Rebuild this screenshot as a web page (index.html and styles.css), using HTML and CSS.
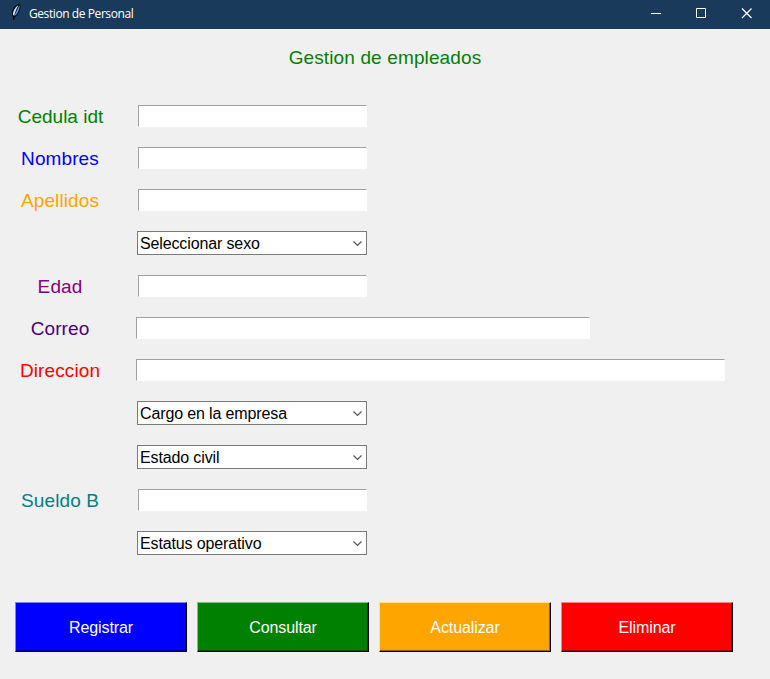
FILE: index.html
```html
<!DOCTYPE html>
<html lang="es">
<head>
<meta charset="utf-8">
<title>Gestion de Personal</title>
<link rel="stylesheet" href="styles.css">
</head>
<body>
<header class="titlebar">
<svg class="feather" width="16" height="17" viewBox="0 0 16 17"><path d="M11 0h2l.5 3-1 4-2 4-2.500 2L7 16H6v-3L5 11V7l2-4z" fill="#05080e"/><path d="M12.500 1v3l-1.500 4-2 3-2 1z" fill="#5c93d6"/><path d="M11.500 1L9 3 7 6 6 9v2l1 .5L9 6z" fill="#d3e8fa"/></svg>
<span class="caption">Gestion de Personal</span>
<svg class="controls" width="138" height="28" viewBox="0 0 138 28" fill="none" stroke="#fff"><path d="M19 13.500h10M64.500 8.500h9v9h-9z"/><path d="M110 8.500l9.500 9.500M119.500 8.500l-9.500 9.500" stroke-width="1.200"/></svg>
</header>
<main>
<h1>Gestion de empleados</h1>
<form class="form">
<div class="row"><label class="green">Cedula idt</label><input class="short"></div>
<div class="row"><label class="blue">Nombres</label><input class="short"></div>
<div class="row"><label class="orange">Apellidos</label><input class="short"></div>
<div class="row combo-row"><div class="combo"><span>Seleccionar sexo</span><svg width="9" height="6" viewBox="0 0 9 6"><path d="M.5.500l4 4 4-4"/></svg></div></div>
<div class="row"><label class="purple">Edad</label><input class="short"></div>
<div class="row"><label class="indigo">Correo</label><input class="medium"></div>
<div class="row"><label class="red">Direccion</label><input class="long"></div>
<div class="row combo-row"><div class="combo"><span>Cargo en la empresa</span><svg width="9" height="6" viewBox="0 0 9 6"><path d="M.5.500l4 4 4-4"/></svg></div></div>
<div class="row combo-row"><div class="combo"><span>Estado civil</span><svg width="9" height="6" viewBox="0 0 9 6"><path d="M.5.500l4 4 4-4"/></svg></div></div>
<div class="row"><label class="teal">Sueldo B</label><input class="short"></div>
<div class="row combo-row"><div class="combo"><span>Estatus operativo</span><svg width="9" height="6" viewBox="0 0 9 6"><path d="M.5.500l4 4 4-4"/></svg></div></div>
</form>
<div class="actions"><button class="bg-blue">Registrar</button><button class="bg-green">Consultar</button><button class="bg-orange">Actualizar</button><button class="bg-red">Eliminar</button></div>
</main>
</body>
</html>
```
FILE: styles.css
```css
* { box-sizing: border-box; }
body { margin: 0; height: 679px; overflow: hidden; background: #f0f0f0; font-family: "Liberation Sans", Arial, sans-serif; }
.titlebar { display: flex; height: 29px; padding-left: 7px; background: #1a3a5c; color: #fff; }
.feather { margin-top: 4px; }
.caption { margin-left: 6px; font: 12px/28px "Open Sans", sans-serif; letter-spacing: -.42px; }
.controls { margin-left: auto; }
h1 { margin: 17px 0 0; height: 24px; font-size: 19px; line-height: 24px; font-weight: 400; letter-spacing: .13px; color: green; text-align: center; }
.form { margin-top: 25px; }
.row { display: flex; align-items: center; height: 42px; }
.combo-row { height: 44px; padding-left: 137px; }
label { width: 120px; flex: none; padding: 2px 0 0; text-align: center; font-size: 19px; line-height: 24px; letter-spacing: .1px; }
label.green { padding-left: 1px; letter-spacing: 0; }
input { height: 22px; margin: 0 0 0 18px; padding: 0; border: 1px solid; border-color: #a0a0a0 #fff #fff #a0a0a0; background: #fff; outline: 0; }
.short { width: 229px; }
.medium { width: 454px; margin-left: 16px; }
.long { width: 589px; margin-left: 16px; }
.combo { display: flex; align-items: center; justify-content: space-between; width: 230px; height: 24px; padding: 2px 4px 0 2px; border: 1px solid #7a7a7a; background: #fff; font-size: 16px; letter-spacing: -.13px; }
.combo path { fill: none; stroke: #555; stroke-width: 1.2; }
.actions { display: flex; gap: 10px; margin: 37px 0 0 15px; }
button { width: 172px; height: 50px; padding: 1px 0 0; border: 1px solid; border-right-color: #000; border-bottom-color: #000; box-shadow: inset -1px -1px var(--shade); background: var(--face); border-top-color: var(--light); border-left-color: var(--light); color: #fff; font: 16px "Liberation Sans", sans-serif; letter-spacing: -.1px; }
.green { color: green; } .blue { color: blue; } .orange { color: orange; } .purple { color: purple; } .indigo { color: indigo; } .red { color: red; } .teal { color: teal; }
.bg-blue { --face: blue; --light: #7f7fff; --shade: #000099; }
.bg-green { --face: green; --light: #7fbf7f; --shade: #004d00; }
.bg-orange { --face: orange; --light: #ffe47f; --shade: #996300; }
.bg-red { --face: red; --light: #ff7f7f; --shade: #990000; }
```
